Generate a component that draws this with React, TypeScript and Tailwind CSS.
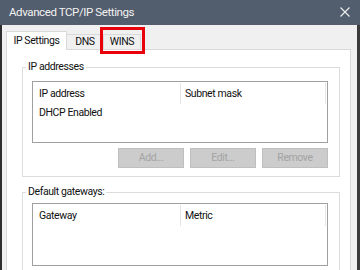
import React from 'react';

const FONT = { fontFamily: 'Roboto, "Noto Sans", Arial, sans-serif' };

function ListBox({ cols, rows, className }: { cols: [string, string]; rows: string[]; className: string }) {
    return (
        <div className={`border border-[#a0a0a0] bg-white pt-[1px] ${className}`}>
            <div className="flex h-[21px] items-center">
                <div className="w-[148px] h-full flex items-center pl-[6px] border-r border-[#e5e5e5]">{cols[0]}</div>
                <div className="flex-1 h-full flex items-center pl-[4px] border-r border-[#e5e5e5] mr-[1px]">{cols[1]}</div>
            </div>
            {rows.map((r) => (
                <div key={r} className="h-[18px] flex items-center pl-[6px]">
                    {r}
                </div>
            ))}
        </div>
    );
}

function GroupBox({ label, children, className }: { label: string; children: React.ReactNode; className?: string }) {
    return (
        <fieldset className={`border border-[#dcdcdc] ${className ?? ''}`}>
            <legend className="ml-[3px] px-[2px] leading-[14px]">{label}</legend>
            {children}
        </fieldset>
    );
}

export default function App() {
    return (
        <div
            className="w-[360px] h-[270px] overflow-hidden bg-[#f0f0f0] flex flex-col text-[10.5px] tracking-[-0.4px] text-[#111]"
            style={FONT}
        >
            {/* Title bar */}
            <div className="h-[25px] shrink-0 bg-[#525d6d] flex items-center justify-between pl-[9px] pr-[10px]">
                <span className="text-[11.5px] text-[#f2f2f2]">Advanced TCP/IP Settings</span>
                <svg width="10" height="10" viewBox="0 0 10 10" className="mb-[2px]">
                    <path d="M0.5 0.5 L9.5 9.5 M9.5 0.5 L0.5 9.5" stroke="#f0f0f0" strokeWidth="1.1" />
                </svg>
            </div>

            {/* Window body */}
            <div className="relative flex-1 border-l-2 border-r-[3px] border-l-[#2e2e2e] border-r-[#3c3c3c] pl-[4px] pr-[6px]">
                {/* Tabs */}
                <div className="flex items-end h-[18px] mt-[6px]">
                    <div className="relative z-10 h-[19px] -mb-px w-[61px] bg-white border border-b-0 border-[#d9d9d9] flex items-center justify-center">
                        IP Settings
                    </div>
                    <div className="h-[15px] w-[37px] border border-b-0 border-l-0 border-[#d9d9d9] flex items-center justify-center">
                        DNS
                    </div>
                    <div className="h-[15px] w-[37px] border border-b-0 border-l-0 border-[#d9d9d9] flex items-center justify-center">
                        WINS
                    </div>
                </div>

                {/* Highlight around WINS tab */}
                <div className="absolute left-[98px] top-[2px] w-[45px] h-[27px] border-[3px] border-[#e8000b]" />

                {/* Tab panel */}
                <div className="h-[230px] bg-white border border-b-0 border-[#d9d9d9] pt-[10px] pl-[15px] pr-[10px]">
                    <GroupBox label="IP addresses">
                        <div className="pl-[9px] pr-[11px] pb-[8px]">
                            <ListBox cols={['IP address', 'Subnet mask']} rows={['DHCP Enabled']} className="mt-[7px] h-[62px]" />
                            <div className="flex justify-end gap-[6px] mt-[5px]">
                                {['Add...', 'Edit...', 'Remove'].map((b) => (
                                    <button
                                        key={b}
                                        disabled
                                        className="w-[66px] h-[20px] bg-[#cccccc] border border-[#bfbfbf] text-[#a3a3a3] leading-none"
                                    >
                                        {b}
                                    </button>
                                ))}
                            </div>
                        </div>
                    </GroupBox>

                    <GroupBox label="Default gateways:" className="mt-[8px]">
                        <div className="pl-[9px] pr-[11px] pb-[8px]">
                            <ListBox cols={['Gateway', 'Metric']} rows={[]} className="mt-[4px] h-[63px]" />
                        </div>
                    </GroupBox>
                </div>
            </div>
        </div>
    );
}
